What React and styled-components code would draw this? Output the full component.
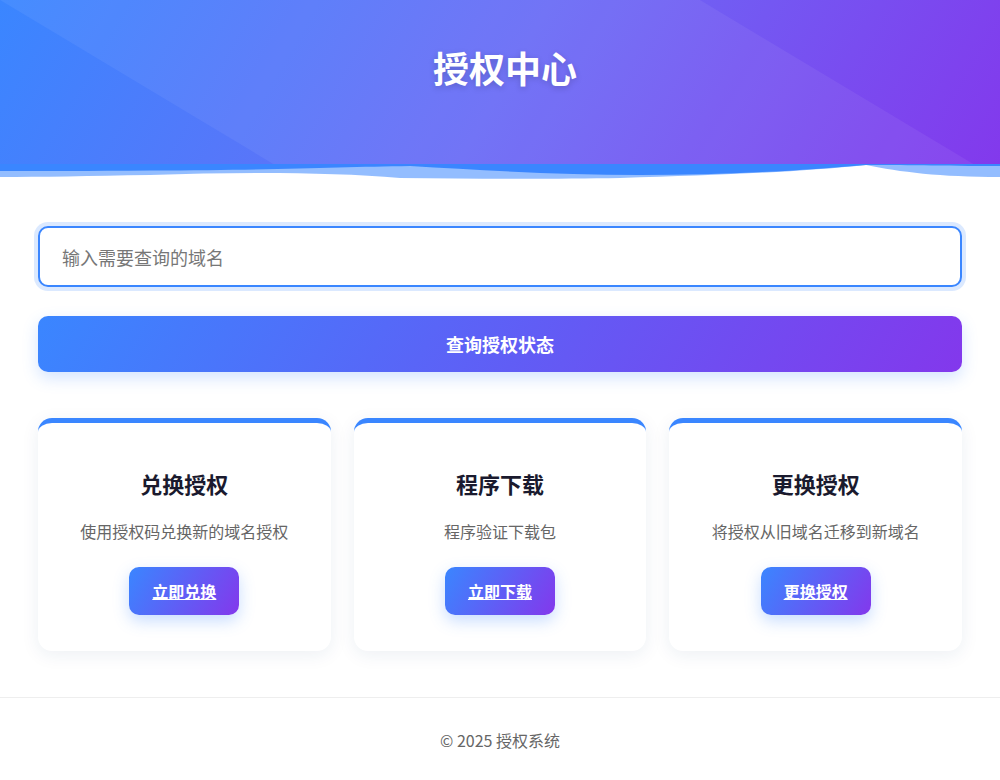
import React from "react";
import styled, { createGlobalStyle } from "styled-components";

const GlobalStyle = createGlobalStyle`
  * { box-sizing: border-box; }
  body {
    margin: 0;
    background: #fff;
    font-family: "Noto Sans CJK SC", "Noto Sans", sans-serif;
    color: #333;
  }
`;

const Header = styled.header`
  position: relative;
  height: 180px;
  overflow: hidden;
  background: linear-gradient(120deg, #3a86ff 0%, #6a6cf6 50%, #8338ec 100%);
  text-align: center;
  padding-top: 41px;
  &::before {
    content: "";
    position: absolute;
    inset: 0;
    background: rgba(255, 255, 255, 0.06);
    clip-path: polygon(0 0, 70% 0, 100% 100%, 30% 100%);
  }
`;

const Title = styled.h1`
  position: relative;
  margin: 0;
  padding-left: 10px;
  font-size: 36px;
  line-height: 52px;
  font-weight: 700;
  color: #fff;
  text-shadow: 0 2px 6px rgba(0, 0, 0, 0.18);
`;

const Wave = styled.svg`
  position: absolute;
  left: 0;
  bottom: 0;
  width: 100%;
  height: 16px;
  display: block;
`;

const Main = styled.main`
  padding: 46px 38px 46px;
`;

const SearchInput = styled.input`
  display: block;
  width: 100%;
  height: 61px;
  padding: 0 22px;
  border: 2px solid #3a86ff;
  border-radius: 10px;
  outline: none;
  font-family: inherit;
  font-size: 18px;
  color: #333;
  box-shadow: 0 0 0 4px rgba(58, 134, 255, 0.18);
  &::placeholder {
    color: #777;
  }
`;

const QueryButton = styled.button`
  display: block;
  width: 100%;
  height: 56px;
  margin-top: 29px;
  border: none;
  border-radius: 10px;
  background: linear-gradient(120deg, #3a86ff, #8338ec);
  color: #fff;
  font-family: inherit;
  font-size: 18px;
  font-weight: 700;
  box-shadow: 0 6px 16px rgba(58, 134, 255, 0.22);
  cursor: pointer;
`;

const CardGrid = styled.div`
  display: grid;
  grid-template-columns: repeat(3, 1fr);
  gap: 23px;
  margin-top: 46px;
`;

const Card = styled.div`
  background: #fff;
  border-top: 5px solid #3a86ff;
  border-radius: 14px;
  padding: 46px 20px 36px;
  text-align: center;
  box-shadow: 0 4px 18px rgba(30, 60, 120, 0.08);
`;

const CardTitle = styled.h3`
  margin: 0;
  font-size: 22px;
  line-height: 28px;
  font-weight: 700;
  color: #1a1a2e;
`;

const CardText = styled.p`
  margin: 21px 0 0;
  font-size: 16px;
  line-height: 26px;
  color: #666;
`;

const CardButton = styled.a`
  display: inline-flex;
  align-items: center;
  justify-content: center;
  width: 110px;
  height: 48px;
  margin-top: 23px;
  border-radius: 10px;
  background: linear-gradient(120deg, #3a86ff, #8338ec);
  color: #fff;
  font-size: 16px;
  font-weight: 700;
  text-decoration: underline;
  box-shadow: 0 6px 16px rgba(58, 134, 255, 0.28);
`;

const Footer = styled.footer`
  border-top: 1px solid #eee;
  padding: 29px 0 26px;
  text-align: center;
  font-size: 16px;
  line-height: 26px;
  color: #666;
`;

const cards = [
  { title: "兑换授权", text: "使用授权码兑换新的域名授权", action: "立即兑换" },
  { title: "程序下载", text: "程序验证下载包", action: "立即下载" },
  { title: "更换授权", text: "将授权从旧域名迁移到新域名", action: "更换授权" },
];

function App() {
  return (
    <>
      <GlobalStyle />
      <Header>
        <Title>授权中心</Title>
        <Wave viewBox="0 0 1000 16" preserveAspectRatio="none">
          <rect x="0" y="0" width="1000" height="16" fill="#fff" />
          <path
            d="M0 0 H1000 V13 C940 13 900 8 866 1 C800 8 720 11 620 14 C560 15 480 15 400 14 C330 8 240 8 150 11 C90 12 40 13 0 13 Z"
            fill="#3a86ff"
            opacity="0.55"
          />
          <path
            d="M0 0 H1000 V2 C940 2 900 1 866 1 C800 7 720 11 640 11 C560 11 480 6 410 2 C340 3 280 6 150 6.5 C90 7 40 7 0 7 Z"
            fill="#3a86ff"
          />
        </Wave>
      </Header>

      <Main>
        <SearchInput placeholder="输入需要查询的域名" />
        <QueryButton>查询授权状态</QueryButton>

        <CardGrid>
          {cards.map((c) => (
            <Card key={c.title}>
              <CardTitle>{c.title}</CardTitle>
              <CardText>{c.text}</CardText>
              <CardButton href="#">{c.action}</CardButton>
            </Card>
          ))}
        </CardGrid>
      </Main>

      <Footer>© 2025 授权系统</Footer>
    </>
  );
}

export default App;
